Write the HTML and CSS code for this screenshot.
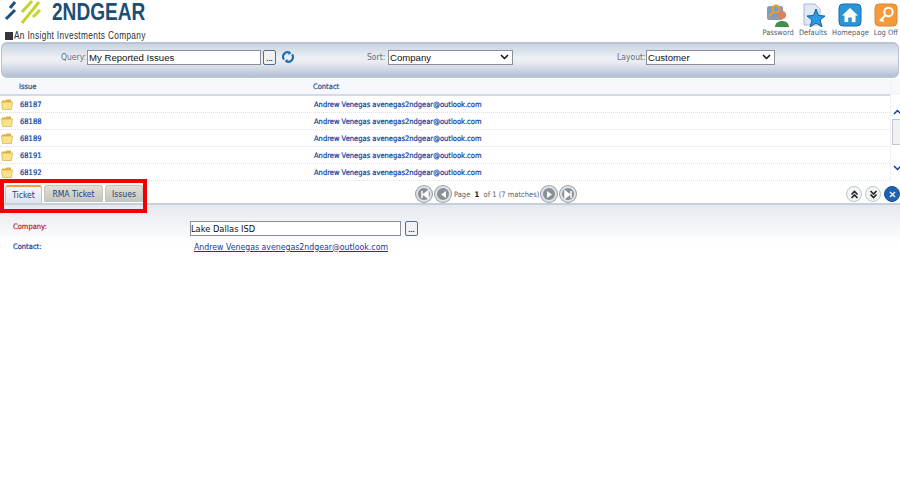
FILE: index.html
```html
<!DOCTYPE html>
<html lang="en">
<head>
    <meta charset="UTF-8">
    <title>2NDGEAR Issues</title>
    <link rel="stylesheet" href="styles.css">
</head>
<body>
    <!-- Logo and shortcuts -->
    <header class="top">
        <div class="logo">
            <div class="logo-main">
                <svg class="logo-mark" width="44" height="24" viewBox="0 0 44 24">
                    <path d="M6 19 L15 10 M10 8 L15 2" stroke="#1d4f78" stroke-width="3" fill="none"/>
                    <path d="M22 23 L39 2 M22 12 L32 1 M33 17 L40 10" stroke="#c5d32c" stroke-width="3" fill="none"/>
                </svg>
                <span class="logo-name">2NDGEAR</span>
            </div>
            <div class="logo-sub"><span class="logo-box"></span><span class="logo-tag">An Insight Investments Company</span></div>
        </div>
        <nav class="shortcuts">
            <a class="shortcut">
                <svg width="24" height="24" viewBox="0 0 24 24">
                    <rect x="1" y="3" width="16" height="14" rx="2" fill="#8f9cab"/>
                    <rect x="2.500" y="4.500" width="13" height="9" fill="#6d9fd0"/>
                    <circle cx="10" cy="6" r="3.500" fill="none" stroke="#ef9a34" stroke-width="2"/>
                    <path d="M7.500 8.500 L3 13.500" stroke="#ef9a34" stroke-width="2"/>
                    <circle cx="16" cy="12" r="4" fill="#d9825b"/>
                    <path d="M9 24 C9 16 23 16 23 24 Z" fill="#3f9048"/>
                </svg>
                <span>Password</span>
            </a>
            <a class="shortcut">
                <svg width="24" height="24" viewBox="0 0 24 24">
                    <path d="M3 1 H14 L19 6 V22 H3 Z" fill="#dfe8f6" stroke="#a9b8d0"/>
                    <path d="M15 6 L17.500 12.500 L24 13 L19 17 L21 24 L15 20 L9 24 L11 17 L6 13 L12.500 12.500 Z" fill="#2a9be0" stroke="#0f5f9e"/>
                </svg>
                <span>Defaults</span>
            </a>
            <a class="shortcut">
                <svg width="24" height="24" viewBox="0 0 24 24">
                    <rect x="1" y="1" width="22" height="22" rx="4" fill="#2b96d6" stroke="#1d6ca6"/>
                    <path d="M12 5 L20 12.500 H17.500 V19 H13.800 V14.500 H10.200 V19 H6.500 V12.500 H4 Z" fill="#fff"/>
                </svg>
                <span>Homepage</span>
            </a>
            <a class="shortcut">
                <svg width="24" height="24" viewBox="0 0 24 24">
                    <rect x="1" y="1" width="22" height="22" rx="4" fill="#f59a3a" stroke="#e4842a"/>
                    <circle cx="14.500" cy="9" r="4.200" fill="none" stroke="#fff" stroke-width="2"/>
                    <path d="M11.500 12 L6 18 M7.500 16.500 L9.500 18.500" stroke="#fff" stroke-width="2" fill="none"/>
                </svg>
                <span>Log Off</span>
            </a>
        </nav>
    </header>

    <!-- Query toolbar -->
    <div class="toolbar">
        <label class="field field-query">Query:
            <span class="textbox query-box">My Reported Issues</span>
        </label>
        <button class="dots">...</button>
        <svg class="refresh" width="12" height="12" viewBox="0 0 12 12">
            <path d="M2 8.500 A4.500 4.500 0 0 1 7.500 1.700 M10 3.500 A4.500 4.500 0 0 1 4.500 10.300" stroke="#1f6fb5" stroke-width="2.200" fill="none"/>
            <path d="M6.500 0 L9.500 2 L6.500 4 Z M5.500 8 L2.500 10 L5.500 12 Z" fill="#1f6fb5"/>
        </svg>
        <label class="field field-sort">Sort:
            <span class="textbox select-box sort-box">Company<svg width="9" height="6" viewBox="0 0 9 6"><path d="M1 1 L4.500 4.500 L8 1" stroke="#111" stroke-width="1.500" fill="none"/></svg></span>
        </label>
        <label class="field field-layout">Layout:
            <span class="textbox select-box layout-box">Customer<svg width="9" height="6" viewBox="0 0 9 6"><path d="M1 1 L4.500 4.500 L8 1" stroke="#111" stroke-width="1.500" fill="none"/></svg></span>
        </label>
    </div>

    <!-- Issue list -->
    <div class="list">
        <div class="list-main">
            <div class="row row-head">
                <span class="cell-issue">Issue</span>
                <span>Contact</span>
            </div>
            <div class="row">
                <svg class="folder" width="12" height="11" viewBox="0 0 12 11"><path d="M1 1.500 H4.500 L5.500 0.500 H10 V9 H1 Z" fill="#e0b243"/><path d="M0.500 3 H11.500 L10.500 10.500 H1.500 Z" fill="#fae28a" stroke="#cfa53f" stroke-width="0.600"/></svg>
                <span class="cell-issue">68187</span>
                <span>Andrew Venegas avenegas2ndgear@outlook.com</span>
            </div>
            <div class="row">
                <svg class="folder" width="12" height="11" viewBox="0 0 12 11"><path d="M1 1.500 H4.500 L5.500 0.500 H10 V9 H1 Z" fill="#e0b243"/><path d="M0.500 3 H11.500 L10.500 10.500 H1.500 Z" fill="#fae28a" stroke="#cfa53f" stroke-width="0.600"/></svg>
                <span class="cell-issue">68188</span>
                <span>Andrew Venegas avenegas2ndgear@outlook.com</span>
            </div>
            <div class="row">
                <svg class="folder" width="12" height="11" viewBox="0 0 12 11"><path d="M1 1.500 H4.500 L5.500 0.500 H10 V9 H1 Z" fill="#e0b243"/><path d="M0.500 3 H11.500 L10.500 10.500 H1.500 Z" fill="#fae28a" stroke="#cfa53f" stroke-width="0.600"/></svg>
                <span class="cell-issue">68189</span>
                <span>Andrew Venegas avenegas2ndgear@outlook.com</span>
            </div>
            <div class="row">
                <svg class="folder" width="12" height="11" viewBox="0 0 12 11"><path d="M1 1.500 H4.500 L5.500 0.500 H10 V9 H1 Z" fill="#e0b243"/><path d="M0.500 3 H11.500 L10.500 10.500 H1.500 Z" fill="#fae28a" stroke="#cfa53f" stroke-width="0.600"/></svg>
                <span class="cell-issue">68191</span>
                <span>Andrew Venegas avenegas2ndgear@outlook.com</span>
            </div>
            <div class="row">
                <svg class="folder" width="12" height="11" viewBox="0 0 12 11"><path d="M1 1.500 H4.500 L5.500 0.500 H10 V9 H1 Z" fill="#e0b243"/><path d="M0.500 3 H11.500 L10.500 10.500 H1.500 Z" fill="#fae28a" stroke="#cfa53f" stroke-width="0.600"/></svg>
                <span class="cell-issue">68192</span>
                <span>Andrew Venegas avenegas2ndgear@outlook.com</span>
            </div>
        </div>
        <div class="scrollbar">
            <svg width="9" height="6" viewBox="0 0 9 6"><path d="M1 5 L4.500 1.500 L8 5" stroke="#0b3f9e" stroke-width="1.500" fill="none"/></svg>
            <div class="thumb"></div>
            <svg width="9" height="6" viewBox="0 0 9 6"><path d="M1 1 L4.500 4.500 L8 1" stroke="#0b3f9e" stroke-width="1.500" fill="none"/></svg>
        </div>
    </div>

    <!-- Tabs and pager -->
    <div class="tabbar">
        <div class="tabs">
            <span class="tab">Ticket</span>
            <span class="tab">RMA Ticket</span>
            <span class="tab">Issues</span>
        </div>
        <div class="pager">
            <span class="round round-grey"><svg width="9" height="9" viewBox="0 0 9 9"><path d="M2 1 V8 M8 1 L3.500 4.500 L8 8 Z" stroke="#fff" fill="#fff" stroke-width="1.500"/></svg></span>
            <span class="round round-grey"><svg width="9" height="9" viewBox="0 0 9 9"><path d="M7 1 L2 4.500 L7 8 Z" fill="#fff"/></svg></span>
            <span class="pager-text">Page&nbsp; <b>1</b>&nbsp; of 1 (7 matches)</span>
            <span class="round round-grey"><svg width="9" height="9" viewBox="0 0 9 9"><path d="M2 1 L7 4.500 L2 8 Z" fill="#fff"/></svg></span>
            <span class="round round-grey"><svg width="9" height="9" viewBox="0 0 9 9"><path d="M7 1 V8 M1 1 L5.500 4.500 L1 8 Z" stroke="#fff" fill="#fff" stroke-width="1.500"/></svg></span>
        </div>
        <div class="panel-btns">
            <span class="round round-light"><svg width="9" height="9" viewBox="0 0 9 9"><path d="M1.500 4.500 L4.500 1.500 L7.500 4.500 M1.500 8 L4.500 5 L7.500 8" stroke="#222" stroke-width="1.600" fill="none"/></svg></span>
            <span class="round round-light"><svg width="9" height="9" viewBox="0 0 9 9"><path d="M1.500 1 L4.500 4 L7.500 1 M1.500 4.500 L4.500 7.500 L7.500 4.500" stroke="#222" stroke-width="1.600" fill="none"/></svg></span>
            <span class="round round-blue"><svg width="9" height="9" viewBox="0 0 9 9"><path d="M2 2 L7 7 M7 2 L2 7" stroke="#dfe9f7" stroke-width="1.600"/></svg></span>
        </div>
        <div class="highlight"></div>
    </div>

    <!-- Ticket form -->
    <div class="form">
        <div class="form-row">
            <span class="form-label form-label-req">Company:</span>
            <span class="textbox company-box">Lake Dallas ISD</span>
            <button class="dots">...</button>
        </div>
        <div class="form-row">
            <span class="form-label">Contact:</span>
            <a class="contact-link">Andrew Venegas avenegas2ndgear@outlook.com</a>
        </div>
    </div>
</body>
</html>
```

FILE: styles.css
```css
* {
    box-sizing: border-box;
    margin: 0;
    padding: 0;
}

body {
    font-family: 'DejaVu Sans Condensed', 'DejaVu Sans', sans-serif;
    font-stretch: condensed;
    font-size: 7.5px;
    background: #fff;
    color: #0f3c9a;
    width: 900px;
    height: 485px;
    overflow: hidden;
}

/* header */
.top {
    display: flex;
    justify-content: space-between;
    height: 42px;
}

.logo-main {
    display: flex;
    align-items: center;
    height: 28px;
}

.logo-mark {
    margin-top: -5px;
    margin-right: 8px;
    flex: none;
}

.logo-name {
    font-family: 'Liberation Sans', sans-serif;
    font-stretch: normal;
    font-weight: 700;
    font-size: 23px;
    line-height: 24px;
    margin-top: -4px;
    color: #1b4f74;
    transform: scaleX(0.83);
    transform-origin: left center;
}

.logo-sub {
    display: flex;
    align-items: center;
    padding-left: 5px;
    margin-top: 2px;
}

.logo-tag {
    font-family: 'Liberation Sans', sans-serif;
    font-stretch: normal;
    font-size: 10px;
    letter-spacing: 0.4px;
    white-space: nowrap;
    color: #2b2f38;
    transform: scaleX(0.83);
    transform-origin: left center;
}

.logo-box {
    width: 8px;
    height: 8px;
    background: #33373d;
    margin-right: 1px;
}

.shortcuts {
    display: flex;
    padding-top: 3px;
    padding-right: 2px;
    gap: 5px;
}

.shortcut {
    display: flex;
    flex-direction: column;
    align-items: center;
    color: #555d68;
    gap: 1px;
}

/* toolbar */
.toolbar {
    display: flex;
    align-items: center;
    height: 36px;
    margin: 0 1px;
    padding-bottom: 6px;
    border: 1px solid #b6c4d6;
    border-top-width: 2px;
    border-bottom-width: 2px;
    border-radius: 6px;
    background: linear-gradient(#c9d3df, #eef1f5 45%, #e6eaf0 60%, #b5c2d2);
    color: #666d78;
    font-size: 8.500px;
}

.field {
    display: flex;
    align-items: center;
    white-space: nowrap;
}

.field-query {
    width: 200px;
    margin-left: 59px;
    justify-content: space-between;
}

.field-sort {
    margin-left: 73px;
    width: 146px;
    justify-content: space-between;
}

.field-layout {
    margin-left: 104px;
    width: 158px;
    justify-content: space-between;
}

.textbox {
    display: flex;
    align-items: center;
    justify-content: space-between;
    height: 15px;
    padding: 0 1px;
    font-family: 'Liberation Sans', sans-serif;
    font-stretch: normal;
    font-size: 9.600px;
    color: #111;
    background: #fff;
    border: 1px solid #8a8f98;
}

.query-box {
    width: 174px;
}

.sort-box {
    width: 125px;
    padding-right: 3px;
}

.layout-box {
    width: 129px;
    padding-right: 3px;
}

.dots {
    width: 13px;
    height: 15px;
    margin-left: 2px;
    font-size: 8px;
    font-weight: 700;
    line-height: 16px;
    color: #333;
    background: #f1f2f4;
    border: 1px solid #556b8f;
    border-radius: 2px;
}

.refresh {
    margin-left: 6px;
}

/* list */
.list {
    display: flex;
    margin-top: 1px;
    height: 102px;
    -webkit-text-stroke: 0.2px;
}

.list-main {
    flex: 1;
}

.row {
    display: flex;
    align-items: center;
    height: 17px;
    padding-left: 1px;
    border-bottom: 1px dotted #dde1e6;
}

.row-head {
    height: 17px;
    padding-left: 19px;
    background: #f6f8fb;
    border-bottom: 2px solid #d3dae5;
    color: #2c4f86;
}

.folder {
    flex: none;
    margin-right: 7px;
}

.cell-issue {
    width: 294px;
    flex: none;
}

.scrollbar {
    width: 10px;
    padding-top: 30px;
    padding-left: 2px;
    background: linear-gradient(#f6f8fb 16px, #fff 16px);
    border-left: 1px solid #f0f2f5;
}

.scrollbar svg {
    display: block;
}

.thumb {
    width: 10px;
    height: 26px;
    margin: 4px 0 20px -1px;
    background: #eff1f4;
    border: 1px solid #c3c8d0;
}

/* tabs and pager */
.tabbar {
    position: relative;
    display: flex;
    align-items: flex-end;
    height: 24px;
    background: #fff;
    border-bottom: 2px solid #c5cedb;
}

.tabs {
    display: flex;
    width: 417px;
    padding-left: 5px;
    gap: 2px;
    font-size: 8.500px;
}

.tab {
    display: flex;
    align-items: center;
    justify-content: center;
    width: 59px;
    height: 17px;
    background: linear-gradient(#e4e0d2, #c2c4bf);
    border: 1px solid #c5c6bf;
    border-bottom: none;
    border-radius: 3px 3px 0 0;
    color: #17407f;
}

.tab:nth-child(1) {
    width: 37px;
    height: 18px;
    background: linear-gradient(#f4f6f9, #dfe5ee);
    border-top: 2px solid #e8a33d;
}

.tab:nth-child(3) {
    width: 38px;
}

.pager {
    display: flex;
    align-items: center;
    align-self: center;
    gap: 3px;
    width: 416px;
    margin-top: 4px;
}

.pager-text {
    width: 88px;
    color: #555d68;
    margin-right: -4px;
    white-space: nowrap;
}

.pager-text b {
    color: #222;
}

.panel-btns {
    display: flex;
    align-self: center;
    gap: 3px;
    margin-left: 15px;
    margin-top: 4px;
}

.round {
    display: flex;
    align-items: center;
    justify-content: center;
    width: 16px;
    height: 16px;
    border-radius: 50%;
}

.round-grey {
    background: #8a9097;
    border: 2px solid #dfe1e4;
    box-shadow: 0 0 0 1px #9a9ea4;
}

.round-light {
    background: #f2f4f7;
    border: 1px solid #bfc5cd;
}

.round-blue {
    background: #1d62b5;
    border: 1px solid #174f94;
}

.highlight {
    position: absolute;
    left: 0;
    top: -2px;
    width: 147px;
    height: 34px;
    border: 4px solid #f00000;
}

/* form */
.form {
    padding: 16px 0 0 13px;
    height: 60px;
    background: linear-gradient(#e5e8ee, #fff 38px);
}

.form-row {
    display: flex;
    align-items: center;
    height: 15px;
    margin-bottom: 3px;
}

.form-label {
    width: 177px;
    margin-top: -1px;
    color: #0f3c9a;
    -webkit-text-stroke: 0.2px;
}

.form-label-req {
    margin-top: -4px;
    color: #c01f2a;
}

.company-box {
    width: 211px;
    padding: 0;
    font-family: 'DejaVu Sans', sans-serif;
    font-size: 8.300px;
}

.form-row .dots {
    margin-left: 4px;
}

.contact-link {
    margin-left: 4px;
    font-size: 8.700px;
    color: #0f3c9a;
    text-decoration: underline;
}
```
